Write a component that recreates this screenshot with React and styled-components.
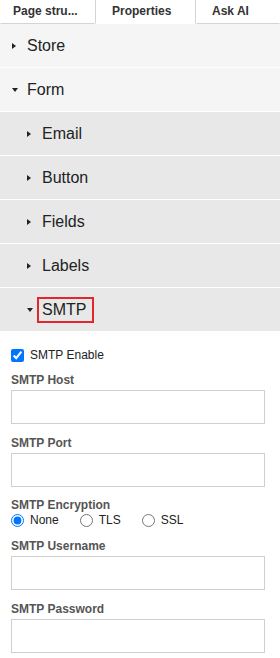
import React from "react";
import styled, { createGlobalStyle } from "styled-components";

const Global = createGlobalStyle`
  html, body { margin: 0; padding: 0; background: #fff; }
  body { font-family: "Liberation Sans", Arial, sans-serif; }
  * { box-sizing: border-box; }
`;

const Panel = styled.div`
  width: 280px;
  display: flex;
  flex-direction: column;
`;

const Tabs = styled.div`
  display: flex;
  height: 24px;
`;

const Tab = styled.div`
  width: ${(p) => p.$w}px;
  height: 24px;
  padding-left: ${(p) => p.$pl}px;
  display: flex;
  align-items: center;
  font-size: 12px;
  font-weight: bold;
  color: #333;
  background: #fff;
  border-bottom: 1px solid ${(p) => (p.$active ? "transparent" : "#d4d4d4")};
  border-left: 1px solid ${(p) => (p.$active ? "#d4d4d4" : "transparent")};
  border-right: 1px solid ${(p) => (p.$active ? "#d4d4d4" : "transparent")};
  white-space: nowrap;
  padding-bottom: 1px;
`;

const Row = styled.div`
  height: 44px;
  display: flex;
  align-items: center;
  padding-left: ${(p) => (p.$nested ? 27 : 12)}px;
  background: ${(p) => (p.$nested ? "#e8e8e8" : "#f5f5f5")};
  border-bottom: 1px solid #fff;
  font-size: 16px;
  color: #222;
`;

const Caret = styled.span`
  display: inline-block;
  width: 0;
  height: 0;
  ${(p) =>
    p.$open
      ? `border-top: 4px solid #222; border-left: 3px solid transparent; border-right: 3px solid transparent; margin-right: 9px;`
      : `border-left: 4px solid #222; border-top: 3.5px solid transparent; border-bottom: 3.5px solid transparent; margin-right: 11px;`}
`;

const Highlight = styled.span`
  display: inline-block;
  line-height: 16px;
  padding-right: 3px;
  outline: 2px solid #e3262d;
  outline-offset: 3px;
`;

const Content = styled.div`
  padding: 16px 15px 0 11px;
  display: flex;
  flex-direction: column;
`;

const CheckRow = styled.label`
  display: flex;
  align-items: center;
  font-size: 12px;
  color: #222;
  height: 14px;
  margin-bottom: 11px;
  input {
    margin: 0 6px 0 0;
    width: 13px;
    height: 13px;
  }
`;

const FieldLabel = styled.div`
  font-size: 12px;
  font-weight: bold;
  color: #555;
  line-height: 14px;
  margin-top: ${(p) => p.$mt ?? 12}px;
  margin-bottom: ${(p) => p.$mb ?? 3}px;
`;

const TextBox = styled.input`
  width: 254px;
  height: 34px;
  border: 1px solid #cfcfcf;
  border-radius: 0;
  background: #fff;
  outline: none;
  padding: 0 6px;
  margin: 0;
`;

const RadioGroup = styled.div`
  display: flex;
  align-items: center;
  height: 14px;
`;

const RadioOpt = styled.label`
  display: flex;
  align-items: center;
  font-size: 12px;
  color: #222;
  margin-right: ${(p) => p.$mr}px;
  input {
    margin: 0 6px 0 0;
    width: 13px;
    height: 13px;
  }
`;

const Item = ({ label, nested, open, highlight }) => (
  <Row $nested={nested}>
    <Caret $open={open} />
    {highlight ? <Highlight>{label}</Highlight> : label}
  </Row>
);

export default function App() {
  return (
    <Panel>
      <Global />
      <Tabs>
        <Tab $w={95} $pl={12}>Page stru...</Tab>
        <Tab $w={101} $pl={16} $active>Properties</Tab>
        <Tab $w={84} $pl={15}>Ask AI</Tab>
      </Tabs>
      <Item label="Store" />
      <Item label="Form" open />
      <Item label="Email" nested />
      <Item label="Button" nested />
      <Item label="Fields" nested />
      <Item label="Labels" nested />
      <Item label="SMTP" nested open highlight />
      <Content>
        <CheckRow>
          <input type="checkbox" defaultChecked />
          SMTP Enable
        </CheckRow>
        <FieldLabel $mt={0}>SMTP Host</FieldLabel>
        <TextBox />
        <FieldLabel>SMTP Port</FieldLabel>
        <TextBox />
        <FieldLabel $mt={11} $mb={1}>SMTP Encryption</FieldLabel>
        <RadioGroup>
          <RadioOpt $mr={21}>
            <input type="radio" name="enc" defaultChecked />
            None
          </RadioOpt>
          <RadioOpt $mr={21}>
            <input type="radio" name="enc" />
            TLS
          </RadioOpt>
          <RadioOpt $mr={0}>
            <input type="radio" name="enc" />
            SSL
          </RadioOpt>
        </RadioGroup>
        <FieldLabel>SMTP Username</FieldLabel>
        <TextBox />
        <FieldLabel>SMTP Password</FieldLabel>
        <TextBox />
      </Content>
    </Panel>
  );
}
